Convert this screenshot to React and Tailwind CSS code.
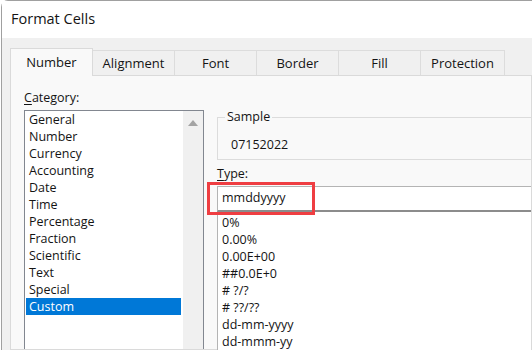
import React from 'react';

const categories = ['General', 'Number', 'Currency', 'Accounting', 'Date', 'Time', 'Percentage', 'Fraction', 'Scientific', 'Text', 'Special', 'Custom'];
const types = ['0%', '0.00%', '0.00E+00', '##0.0E+0', '# ?/?', '# ??/??', 'dd-mm-yyyy', 'dd-mmm-yy'];
const tabs = ['Alignment', 'Font', 'Border', 'Fill', 'Protection'];

export default function App() {
  return (
    <div className="w-[532px] h-[350px] overflow-hidden bg-white font-['Open_Sans',sans-serif] text-[#141414]">
      <div className="h-full flex flex-col border-l border-t border-[#a0a0a0] rounded-tl-[7px] ml-px">
        {/* title bar */}
        <div className="h-[37px] shrink-0 bg-white flex items-center pl-[9px] text-[14.5px] leading-none">
          Format Cells
        </div>

        <div className="flex-1 bg-[#f0f0f0] pl-[8px] pt-[9px] flex flex-col min-h-0">
          {/* tabs */}
          <div className="flex items-end h-[28px] shrink-0">
            <div className="w-[83px] h-[28px] bg-[#f9f9f9] border border-b-0 border-[#dadada] flex items-center justify-center text-[13px] relative z-10 -mb-px">
              Number
            </div>
            {tabs.map((t, i) => (
              <div
                key={t}
                className={`h-[25px] bg-[#f0f0f0] border-t border-r border-[#dcdcdc] flex items-center justify-center text-[13px] pt-px ${i === 4 ? 'w-[84px]' : 'w-[82px]'}`}
              >
                {t}
              </div>
            ))}
          </div>

          {/* panel */}
          <div className="flex-1 bg-[#f9f9f9] border border-[#dadada] flex pl-[13px] pt-[13px] min-h-0">
            {/* category column */}
            <div className="w-[180px] shrink-0 flex flex-col">
              <div className="text-[12.5px] leading-[17px] h-[17px]">
                <span className="underline underline-offset-2">C</span>ategory:
              </div>
              <div className="mt-[4px] flex-1 bg-white border border-[#828790] border-b-0 flex">
                <div className="flex-1 pl-px">
                  {categories.map((c) => (
                    <div
                      key={c}
                      className={`h-[17px] leading-[17px] text-[12.5px] pl-[3px] ${c === 'Custom' ? 'bg-[#0078d7] text-white' : ''}`}
                    >
                      {c}
                    </div>
                  ))}
                </div>
                <div className="w-[20px] ml-[2px] bg-[#f0f0f0] flex justify-center pt-[9px]">
                  <svg width="10" height="6" viewBox="0 0 10 6">
                    <polygon points="0,6 10,6 5,0" fill="#a3a3a3" />
                  </svg>
                </div>
              </div>
            </div>

            {/* right column */}
            <div className="flex-1 ml-[13px] flex flex-col min-w-0">
              {/* sample group */}
              <div className="relative mt-[28px] h-[43px] border border-r-0 border-[#dcdcdc] shrink-0">
                <span className="absolute -top-[10px] left-[7px] px-[2px] bg-[#f9f9f9] text-[12.5px] leading-[17px]">Sample</span>
                <div className="pt-[18px] pl-[13px] text-[12.5px] leading-[17px]">07152022</div>
              </div>

              <div className="mt-[5px] text-[12.5px] leading-[17px] h-[17px]">
                <span className="underline underline-offset-2">T</span>ype:
              </div>

              <div className="relative mt-[4px] shrink-0">
                <div className="h-[26px] bg-white border-t border-l border-[#b4b4b4] border-b-2 border-b-[#8c8c8c] flex items-center pl-[4px] text-[12.5px]">
                  mmddyyyy
                </div>
                <div className="absolute -left-[10px] -top-[4px] w-[108px] h-[33px] border-[3px] border-[#ef3e42]" />
              </div>

              <div className="flex-1 bg-white border-l border-[#b4b4b4] pt-[2px] pl-[4px]">
                {types.map((t) => (
                  <div key={t} className="h-[17px] leading-[17px] text-[12.5px]">{t}</div>
                ))}
              </div>
            </div>
          </div>
        </div>
      </div>
    </div>
  );
}
